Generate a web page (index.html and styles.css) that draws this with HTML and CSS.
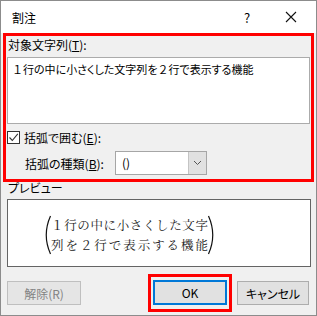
FILE: index.html
```html
<!DOCTYPE html>
<html lang="ja">
<head>
  <meta charset="UTF-8">
  <title>割注</title>
  <link rel="stylesheet" href="styles.css">
</head>
<body>
  <div class="window">
    <div class="titlebar">
      <span class="title">割注</span>
      <span class="help">?</span>
      <span class="close">
        <svg width="12" height="12" viewBox="0 0 12 12"><path d="M1 1 L11 11 M11 1 L1 11" stroke="#111" stroke-width="1.1" fill="none"/></svg>
      </span>
    </div>

    <div class="content">
      <div class="marked target">
        <div class="label">対象文字列(<u>T</u>):</div>
        <div class="textbox"><span class="fw">１</span>行の中に小さくした文字列を<span class="fw">２</span>行で表示する機能</div>

        <div class="check-row">
          <span class="checkbox">
            <svg width="11" height="11" viewBox="0 0 11 11"><path d="M1.5 5.5 L4.3 8.5 L9.8 1.8" stroke="#333" stroke-width="1.1" fill="none"/></svg>
          </span>
          <span>括弧で囲む(<u>E</u>):</span>
        </div>

        <div class="kind-row">
          <span class="kind-label">括弧の種類(<u>B</u>):</span>
          <div class="combo">
            <span class="combo-value">()</span>
            <span class="combo-arrow">
              <svg width="9" height="6" viewBox="0 0 9 6"><path d="M1 1 L4.5 4.5 L8 1" stroke="#555" stroke-width="1" fill="none"/></svg>
            </span>
          </div>
        </div>
      </div>

      <div class="preview-label">プレビュー</div>
      <div class="preview">
        <svg class="paren" width="10" height="40" viewBox="0 0 10 40"><path d="M8.5 1 Q0 20 8.5 39" stroke="#111" stroke-width="1.2" fill="none"/></svg>
        <div class="warichu">
          <div class="wline"><span class="fw">１</span>行の中に小さくした文字</div>
          <div class="wline">列を<span class="fw">２</span>行で表示する機能</div>
        </div>
        <svg class="paren" width="10" height="40" viewBox="0 0 10 40"><path d="M1.5 1 Q10 20 1.5 39" stroke="#111" stroke-width="1.2" fill="none"/></svg>
      </div>

      <div class="buttons">
        <button class="btn disabled">解除(R)</button>
        <div class="marked ok-wrap">
          <button class="btn default">OK</button>
        </div>
        <button class="btn cancel">キャンセル</button>
      </div>
    </div>
  </div>
</body>
</html>
```

FILE: styles.css
```css
* {
  box-sizing: border-box;
}

body {
  margin: 0;
  font-family: "Noto Sans CJK JP", sans-serif;
  font-size: 12px;
  font-feature-settings: "palt";
  color: #000;
  background: #fff;
}

u {
  text-decoration: underline;
  text-underline-offset: 1px;
}

/* full-width digits keep their full em */
.fw {
  font-feature-settings: normal;
}

.window {
  width: 317px;
  height: 316px;
  border: 1px solid #8c8c8c;
  background: #f0f0f0;
  overflow: hidden;
}

.titlebar {
  height: 32px;
  background: #fff;
  display: flex;
  align-items: center;
  padding-left: 11px;
}

.title {
  font-size: 12px;
  flex: 1;
}

.help {
  width: 14px;
  font-size: 13px;
  margin-right: 27px;
}

.close {
  display: flex;
  margin-right: 19px;
}

/* red highlight boxes */
.marked {
  border: 3px solid #ff0000;
}

.target {
  margin: 0 2px;
  padding: 0 0 4px;
}

.label {
  height: 18px;
  line-height: 18px;
  padding-left: 2px;
  margin-bottom: 3px;
}

.textbox {
  margin: 0 1px;
  height: 67px;
  background: #fff;
  border: 1px solid #ababab;
  padding: 3px 4px;
  line-height: 16px;
  font-size: 11px;
}

.check-row {
  display: flex;
  align-items: center;
  height: 18px;
  margin-top: 4px;
  padding-left: 1px;
  gap: 4px;
}

.checkbox {
  width: 13px;
  height: 13px;
  border: 1px solid #333;
  background: #fff;
  display: flex;
  align-items: center;
  justify-content: center;
}

.kind-row {
  display: flex;
  align-items: center;
  height: 24px;
  margin-top: 5px;
  padding-left: 19px;
}

.kind-label {
  width: 90px;
}

.combo {
  width: 92px;
  height: 24px;
  border: 1px solid #a6a6a6;
  background: #fff;
  display: flex;
}

.combo-value {
  flex: 1;
  padding-left: 6px;
  line-height: 22px;
  font-size: 12px;
}

.combo-arrow {
  width: 18px;
  background: #e1e1e1;
  border-left: 1px solid #c4c4c4;
  display: flex;
  align-items: center;
  justify-content: center;
}

.preview-label {
  height: 14px;
  line-height: 11px;
  padding-left: 7px;
  margin-bottom: 3px;
}

.preview {
  margin: 0 5px 0 6px;
  height: 68px;
  background: #fff;
  border: 1px solid #646464;
  display: flex;
  align-items: center;
  padding: 4px 0 0 34px;
}

.warichu {
  width: 157px;
  margin: 0 -1px;
  font-family: "Noto Serif CJK JP", "Noto Sans CJK JP", serif;
  font-size: 12.5px;
  font-feature-settings: normal;
  color: #222;
}

.wline {
  height: 20px;
  line-height: 20px;
  text-align: justify;
  text-align-last: justify;
}

.buttons {
  display: flex;
  align-items: center;
  margin-top: 7px;
  padding: 0 7px 0 6px;
}

.btn {
  font-family: inherit;
  font-size: 12px;
  font-feature-settings: "palt";
  height: 24px;
  background: #e1e1e1;
  border: 1px solid #adadad;
  padding: 0;
  color: #000;
}

.disabled {
  width: 74px;
  background: #e5e5e5;
  border-color: #bfbfbf;
  color: #838383;
}

.ok-wrap {
  margin-left: auto;
  width: 84px;
  padding: 3px 2px 4px;
}

.default {
  width: 74px;
  height: 25px;
  border: 2px solid #0078d7;
}

.cancel {
  width: 72px;
  margin-left: 5px;
}
```
